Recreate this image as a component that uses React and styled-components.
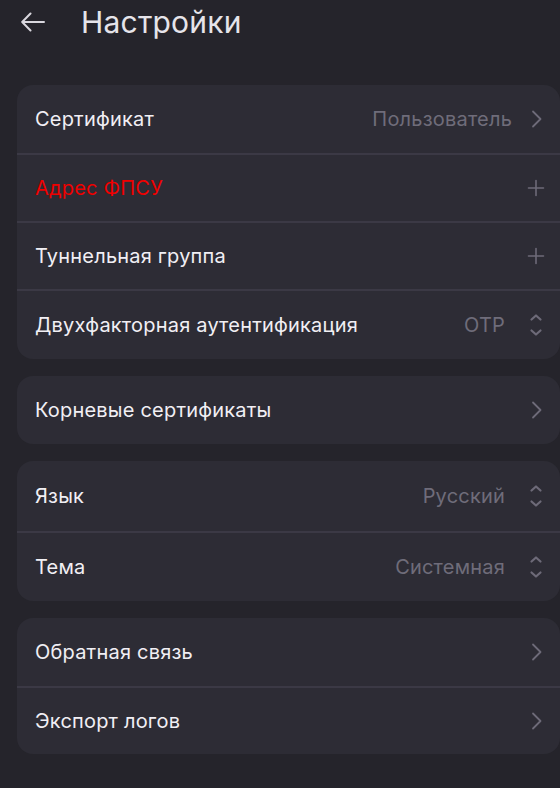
import styled, { createGlobalStyle } from "styled-components";

const GlobalStyle = createGlobalStyle`
  body {
    margin: 0;
    background: #25242b;
    font-family: Inter, "Noto Sans", sans-serif;
  }
`;

const sections = [
  [
    { label: "Сертификат", value: "Пользователь", icon: "chevron" },
    { label: "Адрес ФПСУ", icon: "plus", danger: true },
    { label: "Туннельная группа", icon: "plus" },
    { label: "Двухфакторная аутентификация", value: "OTP", icon: "updown" },
  ],
  [{ label: "Корневые сертификаты", icon: "chevron" }],
  [
    { label: "Язык", value: "Русский", icon: "updown" },
    { label: "Тема", value: "Системная", icon: "updown" },
  ],
  [
    { label: "Обратная связь", icon: "chevron" },
    { label: "Экспорт логов", icon: "chevron" },
  ],
];

function Icon({ name }) {
  if (name === "plus") {
    return (
      <svg width="24" height="24" viewBox="0 0 24 24" fill="none" stroke="currentColor" strokeWidth="1.6" strokeLinecap="round">
        <path d="M12 4.5v15M4.5 12h15" />
      </svg>
    );
  }
  if (name === "updown") {
    return (
      <svg width="24" height="26" viewBox="0 0 24 26" fill="none" stroke="currentColor" strokeWidth="2.2" strokeLinecap="round" strokeLinejoin="round">
        <path d="M7.5 7.5L12 3.5l4.5 4M7.5 18.5l4.5 4 4.5-4" />
      </svg>
    );
  }
  return (
    <svg width="24" height="24" viewBox="0 0 24 24" fill="none" stroke="currentColor" strokeWidth="1.8" strokeLinecap="round" strokeLinejoin="round">
      <path d="M9 4.5l7.5 7.5L9 19.5" />
    </svg>
  );
}

export default function App() {
  return (
    <>
      <GlobalStyle />
      <Page>
        <Header>
          <BackButton aria-label="Назад">
            <svg width="24" height="20" viewBox="0 0 24 20" fill="none" stroke="currentColor" strokeWidth="2" strokeLinecap="round" strokeLinejoin="round">
              <path d="M23 10H1.5M9.5 1.5L1.2 10l8.3 8.5" />
            </svg>
          </BackButton>
          <Title>Настройки</Title>
        </Header>
        <List>
          {sections.map((rows, i) => (
            <Card key={i}>
              {rows.map((row) => {
                const picker = row.icon === "updown";
                return (
                  <Row key={row.label} $tall={picker}>
                    <Label $danger={row.danger}>{row.label}</Label>
                    {row.value && <Value $picker={picker}>{row.value}</Value>}
                    <IconBox>
                      <Icon name={row.icon} />
                    </IconBox>
                  </Row>
                );
              })}
            </Card>
          ))}
        </List>
      </Page>
    </>
  );
}

const Page = styled.div`
  min-height: 788px;
  background: #25242b;
`;

const Header = styled.header`
  display: flex;
  align-items: center;
  height: 44px;
  padding-left: 21px;
`;

const BackButton = styled.button`
  display: flex;
  align-items: center;
  padding: 0;
  background: transparent;
  border: none;
  color: #d9d7de;
  margin-right: 36px;
`;

const Title = styled.h1`
  margin: 0;
  font-size: 30px;
  font-weight: 400;
  color: #e6e4ea;
  letter-spacing: 0.2px;
`;

const List = styled.div`
  display: flex;
  flex-direction: column;
  gap: 17px;
  padding: 41px 0 0 17px;
`;

const Card = styled.section`
  background: #2d2c35;
  border-radius: 16px;
  overflow: hidden;
`;

const Row = styled.div`
  box-sizing: border-box;
  display: flex;
  align-items: center;
  height: ${(p) => (p.$tall ? "70px" : "68px")};
  padding: 0 12px 0 18px;

  & + & {
    border-top: 2px solid #3b3945;
  }
`;

const Label = styled.span`
  flex: 1;
  font-size: 20px;
  letter-spacing: 0.2px;
  color: ${(p) => (p.$danger ? "#f00000" : "#f1eff4")};
`;

const Value = styled.span`
  font-size: 20px;
  letter-spacing: 0.2px;
  color: #6f6c7a;
  margin-right: ${(p) => (p.$picker ? "19px" : "12px")};
`;

const IconBox = styled.span`
  display: flex;
  align-items: center;
  justify-content: center;
  width: 24px;
  color: #6d6a78;
`;
